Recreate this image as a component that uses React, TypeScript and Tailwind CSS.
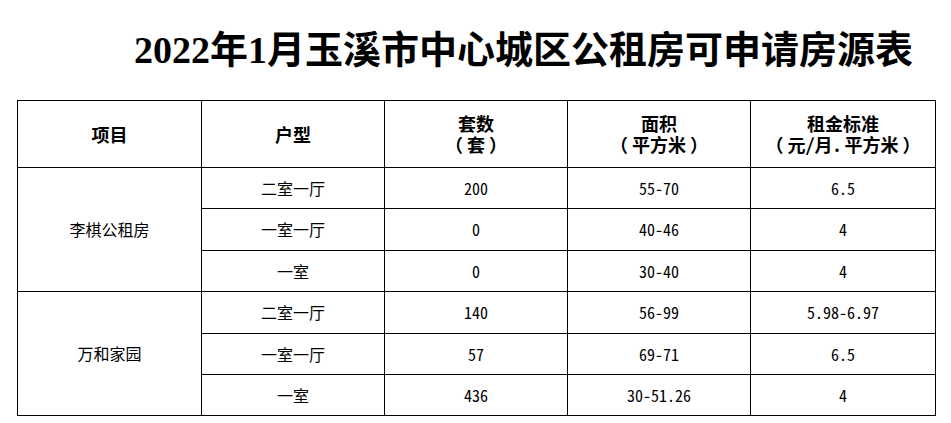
const cellFont = {
  fontFamily: '"Noto Sans Mono CJK SC", "Noto Sans CJK SC", "Liberation Sans", sans-serif',
};

type Row = { project?: string; span?: number; type: string; count: string; area: string; rent: string; h: string };

const rows: Row[] = [
  { project: '李棋公租房', span: 3, type: '二室一厅', count: '200', area: '55-70', rent: '6.5', h: 'h-[41px]' },
  { type: '一室一厅', count: '0', area: '40-46', rent: '4', h: 'h-[42px]' },
  { type: '一室', count: '0', area: '30-40', rent: '4', h: 'h-[41px]' },
  { project: '万和家园', span: 3, type: '二室一厅', count: '140', area: '56-99', rent: '5.98-6.97', h: 'h-[42px]' },
  { type: '一室一厅', count: '57', area: '69-71', rent: '6.5', h: 'h-[41px]' },
  { type: '一室', count: '436', area: '30-51.26', rent: '4', h: 'h-[41px]' },
];

const th = 'border border-black p-0 text-center align-middle';

// unit line under a header, e.g. （平方米）
function Unit({ children }: { children: React.ReactNode }) {
  return (
    <div>
      （<span className="px-[4px]">{children}</span>）
    </div>
  );
}

export default function App() {
  return (
    <div className="h-[423px] w-[951px] overflow-hidden bg-white text-black">
      <div className="h-[100px] pl-[134px] pt-[31px]">
        <h1
          className="whitespace-nowrap text-[38px] font-bold leading-[38px] text-black"
          style={{ fontFamily: '"Liberation Serif", "Noto Sans CJK SC", serif' }}
        >
          2022年1月玉溪市中心城区公租房可申请房源表
        </h1>
      </div>

      <table
        className="ml-[17px] w-[918px] table-fixed border-collapse text-[16px] leading-[21px]"
        style={cellFont}
      >
        <colgroup>
          <col className="w-[184px]" />
          <col className="w-[183px]" />
          <col className="w-[183px]" />
          <col className="w-[183px]" />
          <col className="w-[185px]" />
        </colgroup>
        <thead>
          <tr className="h-[67px] text-[18px] font-bold">
            <th className={th}>项目</th>
            <th className={th}>户型</th>
            <th className={th}>
              <div>套数</div>
              <Unit>套</Unit>
            </th>
            <th className={th}>
              <div>面积</div>
              <Unit>平方米</Unit>
            </th>
            <th className={th}>
              <div>租金标准</div>
              <Unit>
                元/月.<span className="pl-[3px]">平方米</span>
              </Unit>
            </th>
          </tr>
        </thead>
        <tbody>
          {rows.map((r, i) => (
            <tr key={i} className={r.h}>
              {r.project && (
                <td rowSpan={r.span} className={th}>
                  {r.project}
                </td>
              )}
              <td className={th}>{r.type}</td>
              <td className={th}>{r.count}</td>
              <td className={th}>{r.area}</td>
              <td className={th}>{r.rent}</td>
            </tr>
          ))}
        </tbody>
      </table>
    </div>
  );
}
